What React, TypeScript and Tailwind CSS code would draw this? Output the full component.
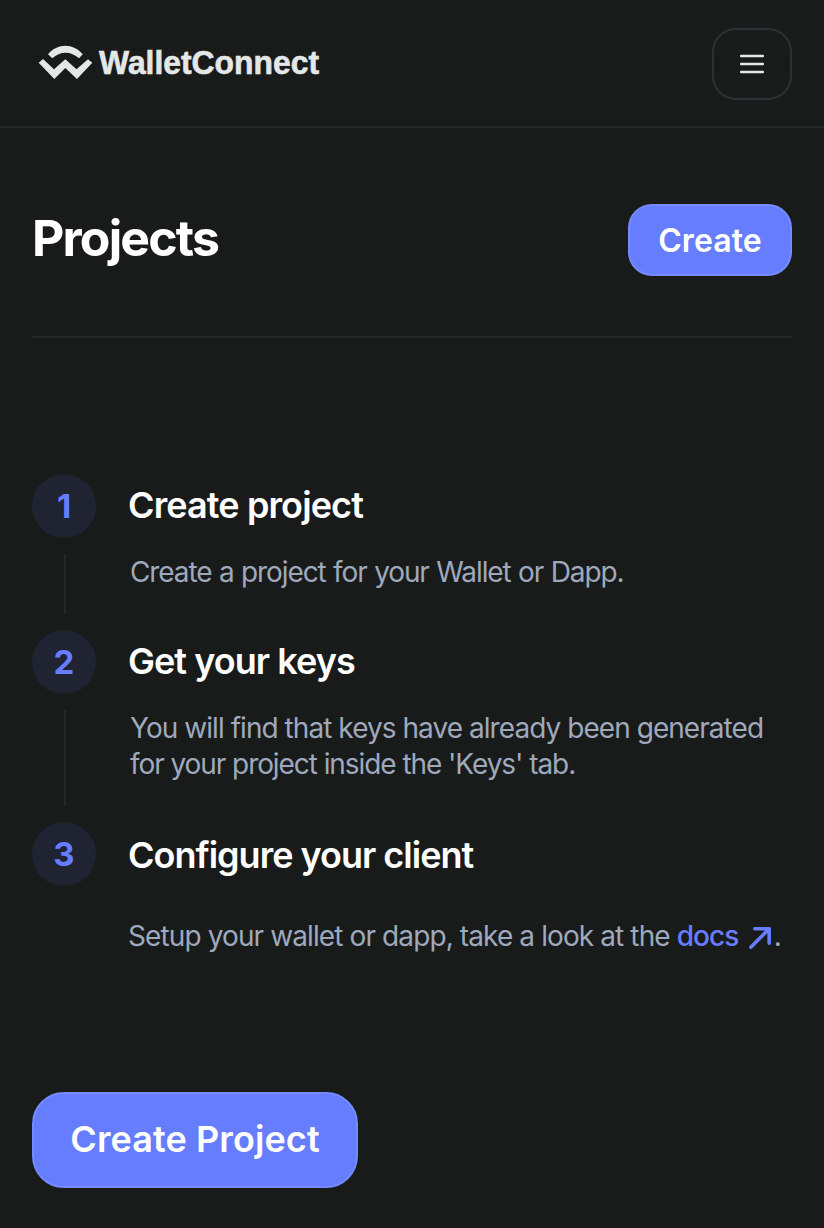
import React from "react";

function Logo() {
  return (
    <svg width="296" height="48" viewBox="0 0 296 48" className="ml-1" aria-label="WalletConnect" role="img">
      <g fill="#e4e7e7">
        <path d="M12 15.3C21.500 3.800 37.200 3.800 46.700 15.300L43 19.300C35 11.800 24 11.800 16.300 19.300Z" />
        <path d="M2.700 23.700L7 20L18 30.300L29.300 20.300L40.500 30.300L52 20.300L56.300 23.700L41 40L29.300 29L18.300 40Z" />
      </g>
      <text x="63" y="35" textLength="220" lengthAdjust="spacingAndGlyphs" fill="#e4e7e7" stroke="#e4e7e7" strokeWidth="0.6" fontFamily="'Liberation Sans', Arial, sans-serif" fontWeight="700" fontSize="33">WalletConnect</text>
    </svg>
  );
}

type StepProps = {
  number: number;
  title: string;
  children: React.ReactNode;
  rowClass: string;
  line?: boolean;
  titleClass: string;
  textClass: string;
};

function Step({ number, title, children, rowClass, line = true, titleClass, textClass }: StepProps) {
  return (
    <li className={`flex gap-8 ${rowClass}`}>
      <div className="flex w-16 shrink-0 flex-col items-center">
        <div className="flex size-16 items-center justify-center rounded-full bg-[#202331] pt-0.5 text-[33px] font-bold text-[#667dff]">{number}</div>
        {line && <div className="my-4 ml-0.5 w-0.5 flex-1 bg-[#252828]" />}
      </div>
      <div className="min-w-0 flex-1">
        <h2 className={`flex h-16 items-center whitespace-nowrap text-[36px] font-semibold text-white ${titleClass}`}>{title}</h2>
        <p className={`whitespace-nowrap text-[28px] leading-9 text-[#9ea9bc] ${textClass}`}>{children}</p>
      </div>
    </li>
  );
}

export default function App() {
  return (
    <div className="min-h-[1228px] w-full bg-[#191b1b] font-[Inter,sans-serif]">
      <header className="flex h-32 items-center justify-between border-b-2 border-[#252828] px-8">
        <Logo />
        <button aria-label="Menu" className="mt-0.5 flex h-[72px] w-20 items-center justify-center rounded-3xl border-2 border-[#2e3131]">
          <svg width="24" height="20" viewBox="0 0 24 20" stroke="#e4e7e7" strokeWidth="2.600" strokeLinecap="round"><path d="M1.200 2H22.800M1.200 10H22.800M1.200 18H22.800" /></svg>
        </button>
      </header>
      <main className="px-8">
        <div className="flex h-[210px] items-center justify-between border-b-2 border-[#252828] pt-4">
          <h1 className="pb-1 text-[50px] leading-[60px] font-bold tracking-[-1.85px] text-white">Projects</h1>
          <button className="h-[72px] w-[164px] rounded-3xl border-2 border-[#758aff] bg-[#667dff] pt-0.5 text-[32px] font-semibold tracking-[0.1px] text-white">Create</button>
        </div>
        <ol className="pt-[136px]">
          <Step number={1} title="Create project" rowClass="h-[156px]" titleClass="pb-0.5 tracking-[-0.88px]" textClass="mt-4 pl-0.5 tracking-[-1.1px] [word-spacing:0.7px]">Create a project for your Wallet or Dapp.</Step>
          <Step number={2} title="Get your keys" rowClass="h-48" titleClass="pb-0.5 tracking-[-0.95px]" textClass="mt-4 pl-0.5 tracking-[-0.95px]">
            You will find that keys have already been generated<br />
            <span className="tracking-[-1.07px]">for your project inside the 'Keys' tab.</span>
          </Step>
          <Step number={3} title="Configure your client" rowClass="h-[270px]" line={false} titleClass="pt-0.5 tracking-[-1px]" textClass="mt-8 tracking-[-0.89px]">
            Setup your wallet or dapp, take a look at the{" "}
            <a href="#" className="font-medium tracking-[-1px] text-[#667dff]">docs <svg className="mr-[3px] ml-1 inline" width="22" height="24" viewBox="0 0 22 24" fill="none" stroke="currentColor" strokeWidth="3.600" strokeLinecap="round" strokeLinejoin="round"><path d="M1.800 21.200L20.200 2.800M5.800 2.800H20.200V17.200" /></svg></a>.
          </Step>
        </ol>
        <button className="h-24 w-[326px] rounded-[32px] border-2 border-[#758aff] bg-[#667dff] pb-0.5 text-[36px] font-semibold tracking-[0.1px] text-white">Create Project</button>
      </main>
    </div>
  );
}
